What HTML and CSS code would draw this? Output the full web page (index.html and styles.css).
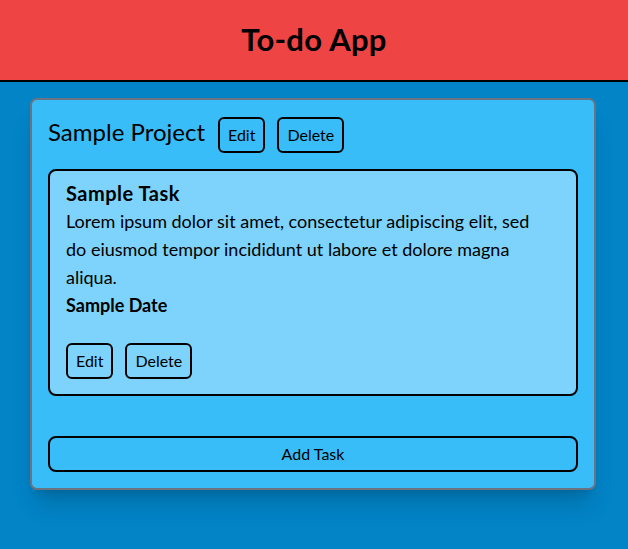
FILE: index.html
```html
<!DOCTYPE html>
<html lang="en">
<head>
<meta charset="utf-8">
<title>To-do App</title>
<link rel="stylesheet" href="styles.css">
</head>
<body>
<header class="app-header">
  <h1 class="app-title">To-do App</h1>
</header>
<main class="main">
  <section class="project">
    <div class="project-head">
      <h2 class="project-name">Sample Project</h2>
      <button class="btn">Edit</button>
      <button class="btn">Delete</button>
    </div>
    <div class="task-list">
      <article class="task">
        <h3 class="task-title">Sample Task</h3>
        <p class="task-desc">Lorem ipsum dolor sit amet, consectetur adipiscing elit, sed do eiusmod tempor incididunt ut labore et dolore magna aliqua.</p>
        <p class="task-date">Sample Date</p>
        <div class="task-actions">
          <button class="btn">Edit</button>
          <button class="btn">Delete</button>
        </div>
      </article>
    </div>
    <button class="btn btn-wide">Add Task</button>
  </section>
</main>
</body>
</html>
```
FILE: styles.css
```css
* { box-sizing: border-box; }
html, body { margin: 0; padding: 0; }
body {
  background: #0284c7;
  font-family: Lato, "Liberation Sans", sans-serif;
  color: #000;
  min-height: 549px;
}
.app-header {
  height: 82px;
  background: #ef4444;
  border-bottom: 2px solid #000;
  display: flex;
  align-items: center;
  justify-content: center;
}
.app-title {
  margin: 0 0 2px;
  font-size: 31px;
  font-weight: 700;
  letter-spacing: 0.3px;
  line-height: 36px;
}
.main { padding-top: 16px; }
.project {
  width: 566px;
  margin-left: 30px;
  background: #38bdf8;
  border: 2px solid #6b7280;
  border-radius: 7px;
  padding: 16px;
  box-shadow: 0 20px 25px -5px rgba(0,0,0,.14), 0 8px 10px -6px rgba(0,0,0,.14);
}
.project-head {
  display: flex;
  align-items: baseline;
  gap: 12px;
}
.project-name {
  margin: 0 1px 0 0;
  font-size: 24px;
  font-weight: 400;
  line-height: 32px;
}
.btn {
  font-family: inherit;
  font-size: 16px;
  line-height: 24px;
  color: #000;
  background: transparent;
  border: 2px solid #000;
  border-radius: 6px;
  padding: 4px 8px;
  cursor: pointer;
}
.task-list { margin-top: 16px; margin-bottom: 40px; }
.task {
  background: #7dd3fc;
  border: 2px solid #000;
  border-radius: 8px;
  padding: 8px 16px 15px;
}
.task-title {
  margin: 0;
  font-size: 20px;
  font-weight: 700;
  letter-spacing: 0.5px;
  line-height: 28px;
}
.task-desc, .task-date {
  margin: 0;
  font-size: 18px;
  line-height: 28px;
}
.task-desc { padding-right: 16px; }
.task-date { font-weight: 700; }
.task-actions {
  display: flex;
  gap: 12px;
  margin-top: 24px;
}
.btn-wide {
  display: block;
  width: 100%;
  border-radius: 8px;
}
```
